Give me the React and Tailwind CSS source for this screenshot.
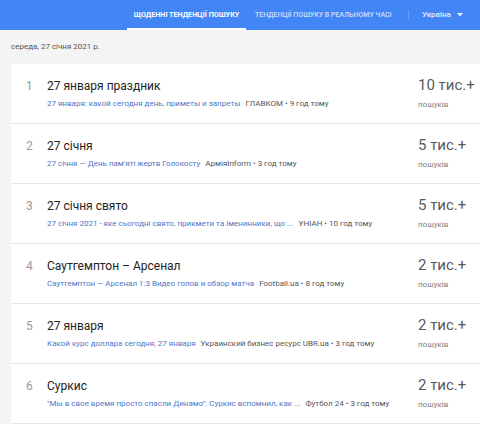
import React from "react";

const rows = [
  { n: 1, title: "27 января праздник", link: "27 января: какой сегодня день, приметы и запреты", src: "ГЛАВКОМ", time: "9 год тому", count: "10 тис.+" },
  { n: 2, title: "27 січня", link: "27 січня — День пам'яті жертв Голокосту", src: "АрміяInform", time: "3 год тому", count: "5 тис.+" },
  { n: 3, title: "27 січня свято", link: "27 січня 2021 - яке сьогодні свято, прикмети та іменинники, що ...", src: "УНІАН", time: "10 год тому", count: "5 тис.+" },
  { n: 4, title: "Саутгемптон – Арсенал", link: "Саутгемптон — Арсенал 1:3 Видео голов и обзор матча", src: "Football.ua", time: "8 год тому", count: "2 тис.+" },
  { n: 5, title: "27 января", link: "Какой курс доллара сегодня, 27 января", src: "Украинский бизнес ресурс UBR.ua", time: "3 год тому", count: "2 тис.+" },
  { n: 6, title: "Суркис", link: "\"Мы в свое время просто спасли Динамо\": Суркис вспомнил, как ...", src: "Футбол 24", time: "3 год тому", count: "2 тис.+" },
];

export default function App() {
  return (
    <div className="w-[480px] h-[424px] overflow-hidden bg-[#f4f4f4]" style={{ fontFamily: "Roboto, 'Noto Sans', sans-serif" }}>
      <div className="h-[30px] bg-[#4285f4] flex items-stretch relative">
        <div className="absolute left-[127px] top-0 h-[30px] w-[119px] flex items-center justify-center">
          <span className="text-[7.2px] font-bold text-white">ЩОДЕННІ ТЕНДЕНЦІЇ ПОШУКУ</span>
          <div className="absolute left-0 right-0 bottom-0 h-[2px] bg-white"></div>
        </div>
        <div className="absolute left-[255px] top-0 h-[30px] flex items-center">
          <span className="text-[7px] font-medium text-white/75">ТЕНДЕНЦІЇ ПОШУКУ В РЕАЛЬНОМУ ЧАСІ</span>
        </div>
        <div className="absolute left-[408px] top-[10px] h-[10px] w-px bg-white/20"></div>
        <div className="absolute left-[422px] top-0 h-[30px] flex items-center">
          <span className="text-[8px] font-medium text-white/85">Україна</span>
          <svg className="ml-[6px]" width="6" height="4" viewBox="0 0 6 4"><path d="M0 0 L6 0 L3 3.5 Z" fill="rgba(255,255,255,0.85)" /></svg>
        </div>
      </div>
      <div className="h-[34px] flex items-center pl-[11px]">
        <span className="text-[8px] text-[#555]">середа, 27 січня 2021 р.</span>
      </div>
      <div className="ml-[11px] bg-white shadow-[0_0_1px_rgba(0,0,0,0.08)]">
        {rows.map((r) => (
          <div key={r.n} className="h-[60px] flex border-b border-[#e6e6e6]">
            <div className="w-[36px] pl-[15px] pt-[15px] text-[12px] leading-[14px] text-[#9a9a9a]">{r.n}</div>
            <div className="flex-1 pt-[15px] min-w-0">
              <div className="text-[12px] leading-[14px] text-[#222]">{r.title}</div>
              <div className="mt-[6px] text-[8px] leading-[10px] whitespace-nowrap">
                <span className="text-[#4f76c7]">{r.link}</span>
                <span className="text-[#555] ml-[5px]">{r.src} • {r.time}</span>
              </div>
            </div>
            <div className="w-[62px] pt-[13px]">
              <div className="text-[15px] leading-[16px] text-[#5a5a5a]">{r.count}</div>
              <div className="mt-[7px] text-[8px] leading-[10px] text-[#808080]">пошуків</div>
            </div>
          </div>
        ))}
      </div>
    </div>
  );
}
